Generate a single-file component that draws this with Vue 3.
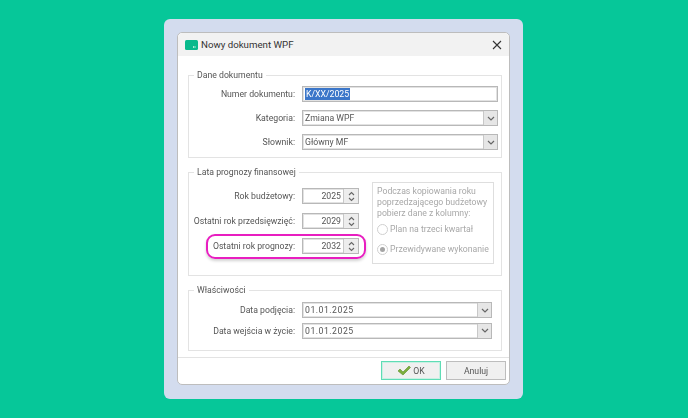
<script setup>
const lines = ['Podczas kopiowania roku', 'poprzedzającego budżetowy', 'pobierz dane z kolumny:']
const years = [
  { label: 'Rok budżetowy:', value: 2025 },
  { label: 'Ostatni rok przedsięwzięć:', value: 2029 },
  { label: 'Ostatni rok prognozy:', value: 2032, mark: true },
]
</script>

<template>
  <div class="page">
    <div class="frame">
      <div class="dialog">
        <div class="titlebar">
          <svg class="doc-icon" width="13" height="10" viewBox="0 0 13 10">
            <rect width="13" height="10" rx="1.500" fill="#08b98c" />
            <path d="M8 7h3M9 6l-1 1 1 1" stroke="#bfeee0" stroke-width="0.8" fill="none" />
          </svg>
          <span class="title">Nowy dokument WPF</span>
          <svg class="close" width="10" height="10" viewBox="0 0 10 10">
            <path d="M1 1l8 8M9 1l-8 8" stroke="#333" stroke-width="1.1" />
          </svg>
        </div>

        <div class="body">
          <fieldset class="group first">
            <legend>Dane dokumentu</legend>
            <div class="rows">
              <div class="row">
                <label>Numer dokumentu:</label>
                <div class="field wide"><span class="selected">K/XX/2025</span></div>
              </div>
              <div class="row">
                <label>Kategoria:</label>
                <div class="field wide combo">
                  <span class="value">Zmiana WPF</span>
                  <span class="drop"><svg width="8" height="5" viewBox="0 0 8 5"><path d="M1 1l3 3 3-3" stroke="#666" stroke-width="1.2" fill="none" /></svg></span>
                </div>
              </div>
              <div class="row">
                <label>Słownik:</label>
                <div class="field wide combo">
                  <span class="value">Główny MF</span>
                  <span class="drop"><svg width="8" height="5" viewBox="0 0 8 5"><path d="M1 1l3 3 3-3" stroke="#666" stroke-width="1.2" fill="none" /></svg></span>
                </div>
              </div>
            </div>
          </fieldset>

          <fieldset class="group second">
            <legend>Lata prognozy finansowej</legend>
            <div class="years">
              <div class="year-rows">
                <div v-for="y in years" :key="y.value" class="row" :class="{ marked: y.mark }">
                  <label>{{ y.label }}</label>
                  <div class="field spinner">
                    <span class="num">{{ y.value }}</span>
                    <span class="spin">
                      <svg width="7" height="5" viewBox="0 0 7 5"><path d="M1 4l2.500-2.500L6 4" stroke="#666" stroke-width="1.1" fill="none" /></svg>
                      <svg width="7" height="5" viewBox="0 0 7 5"><path d="M1 1l2.500 2.500L6 1" stroke="#666" stroke-width="1.1" fill="none" /></svg>
                    </span>
                  </div>
                </div>
              </div>
              <div class="copy-box">
                <div class="copy-text">
                  <div v-for="l in lines" :key="l">{{ l }}</div>
                </div>
                <div class="radio first-radio"><span class="dot"></span><span class="radio-label">Plan na trzeci kwartał</span></div>
                <div class="radio"><span class="dot on"></span><span class="radio-label">Przewidywane wykonanie</span></div>
              </div>
            </div>
          </fieldset>

          <fieldset class="group third">
            <legend>Właściwości</legend>
            <div class="rows dates">
              <div class="row">
                <label>Data podjęcia:</label>
                <div class="field date combo">
                  <span class="value">01.01.2025</span>
                  <span class="drop"><svg width="8" height="5" viewBox="0 0 8 5"><path d="M1 1l3 3 3-3" stroke="#666" stroke-width="1.2" fill="none" /></svg></span>
                </div>
              </div>
              <div class="row">
                <label>Data wejścia w życie:</label>
                <div class="field date combo">
                  <span class="value">01.01.2025</span>
                  <span class="drop"><svg width="8" height="5" viewBox="0 0 8 5"><path d="M1 1l3 3 3-3" stroke="#666" stroke-width="1.2" fill="none" /></svg></span>
                </div>
              </div>
            </div>
          </fieldset>
        </div>

        <div class="footer">
          <button class="btn ok">
            <svg width="14" height="11" viewBox="0 0 14 11">
              <path d="M1 6l2-2 3 3 6-6 1.500 1.500L6 10z" fill="#7cae3c" stroke="#5d8f2c" stroke-width="0.6" />
            </svg>
            OK
          </button>
          <button class="btn">Anuluj</button>
        </div>
      </div>
    </div>
  </div>
</template>

<style>
body {
  background: #06c799;
}
</style>

<style scoped>
.page {
  width: 688px;
  height: 418px;
  display: flex;
  align-items: center;
  justify-content: center;
  font-family: "Roboto", "Liberation Sans", sans-serif;
  font-size: 8.700px;
  color: #555;
}
.frame {
  width: 359px;
  margin-right: 1px;
  height: 380px;
  box-sizing: border-box;
  padding: 13px 13px 14px;
  background: #d3dcee;
  border-radius: 6px;
}
.dialog {
  height: 353px;
  background: #fff;
  border-radius: 5px;
  border: 1px solid #bdbdbd;
  box-sizing: border-box;
  display: flex;
  flex-direction: column;
  filter: blur(0.3px);
}
.titlebar {
  height: 23px;
  flex: none;
  background: #f2f2f2;
  border-radius: 5px 5px 0 0;
  display: flex;
  align-items: center;
  padding: 0 6px 0 7px;
}
.title {
  margin-left: 3px;
  font-size: 9.700px;
  color: #333;
  flex: 1;
}
.close {
  margin-right: 1px;
}
.body {
  flex: 1;
  padding: 13px 7px 0 10px;
}
.group {
  margin: 0;
  padding: 0;
  border: 1px solid #e3e3e3;
  min-width: 0;
}
.group legend {
  margin-left: 5px;
  padding: 0 3px;
  height: 12px;
  line-height: 12px;
  color: #555;
}
.second,
.third {
  margin-top: 8px;
}
.rows {
  display: flex;
  flex-direction: column;
  gap: 8px;
  padding: 5px 0 7px;
}
.dates {
  gap: 4.500px;
  padding: 6px 0 11px;
}
.row {
  display: flex;
  align-items: center;
  gap: 7px;
}
.row label {
  width: 106px;
  text-align: right;
  white-space: nowrap;
  flex: none;
}
.field {
  height: 16px;
  box-sizing: border-box;
  border: 1px solid #b8b8b8;
  box-shadow: inset 0 0 0 1px #e2e2e2;
  background: #fff;
  display: flex;
  align-items: center;
  padding-left: 2px;
  color: #555;
}
.wide {
  width: 196px;
}
.date {
  width: 190px;
}
.date .value {
  letter-spacing: 0.5px;
}
.combo .value {
  flex: 1;
}
.selected {
  background: #3b76c9;
  color: #fff;
  padding: 0 1px;
  line-height: 12px;
}
.drop {
  width: 13px;
  height: 100%;
  background: #e6e6e6;
  border-left: 1px solid #c8c8c8;
  display: flex;
  align-items: center;
  justify-content: center;
}
.years {
  display: flex;
  gap: 13px;
  padding: 4px 0 11px;
}
.year-rows {
  display: flex;
  flex-direction: column;
  gap: 9px;
  padding-top: 6px;
}
.spinner {
  width: 57px;
  padding-left: 0;
}
.num {
  flex: 1;
  text-align: right;
  padding-right: 2px;
}
.spin {
  width: 14px;
  height: 100%;
  background: #ededed;
  border-left: 1px solid #c8c8c8;
  display: flex;
  flex-direction: column;
  align-items: center;
  justify-content: center;
  gap: 1px;
}
.marked {
  position: relative;
}
.marked::after {
  content: "";
  position: absolute;
  left: 17px;
  right: -7px;
  top: -4px;
  bottom: -5px;
  border: 2px solid #e81ec0;
  border-radius: 9px;
  box-shadow: 0 2px 3px rgba(0, 0, 0, 0.18);
}
.copy-box {
  width: 122px;
  height: 82px;
  box-sizing: border-box;
  border: 1px solid #dedede;
  padding: 3px 3px 0 4px;
  color: #a8a8a8;
  line-height: 11px;
  white-space: nowrap;
}
.radio {
  display: flex;
  align-items: center;
  gap: 2px;
  margin-top: 9px;
}
.first-radio {
  margin-top: 5px;
}
.dot {
  width: 11px;
  height: 11px;
  box-sizing: border-box;
  border: 1px solid #cfcfcf;
  border-radius: 50%;
  flex: none;
  position: relative;
}
.dot.on::after {
  content: "";
  position: absolute;
  inset: 2px;
  background: #a5a5a5;
  border-radius: 50%;
}
.footer {
  height: 27px;
  flex: none;
  box-sizing: border-box;
  border-top: 1px solid #e3e3e3;
  display: flex;
  justify-content: flex-end;
  gap: 5px;
  padding: 3px 3px 0 0;
}
.btn {
  width: 60px;
  height: 19px;
  box-sizing: border-box;
  border: 1px solid #bdbdbd;
  background: #f0f0f0;
  font: inherit;
  color: #555;
  padding: 0;
  display: flex;
  align-items: center;
  justify-content: center;
  gap: 2px;
}
.ok {
  border-color: #5fdcb5;
  box-shadow: inset 0 0 0 1px #c9f0e3;
}
</style>
